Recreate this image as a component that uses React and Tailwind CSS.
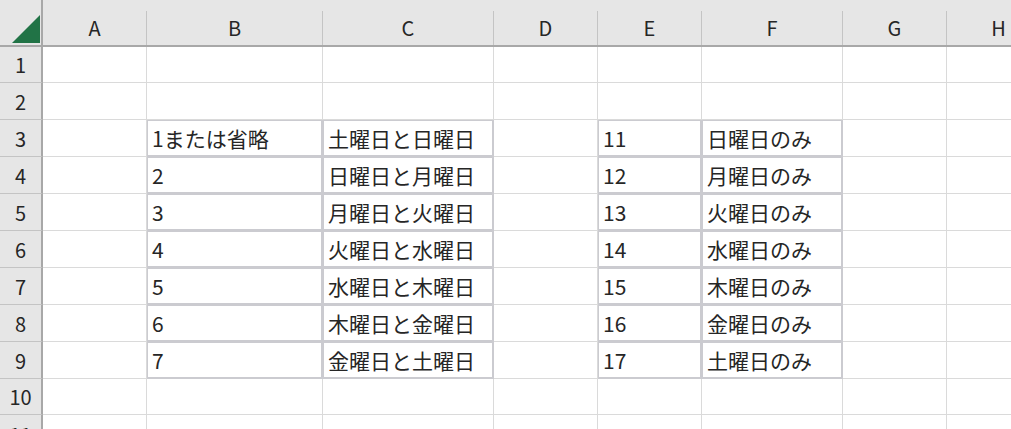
import React from 'react';

const COLS = [
  { key: 'A', w: 'w-[104px]' },
  { key: 'B', w: 'w-[176px]' },
  { key: 'C', w: 'w-[171px]' },
  { key: 'D', w: 'w-[104px]' },
  { key: 'E', w: 'w-[104px]' },
  { key: 'F', w: 'w-[141px]' },
  { key: 'G', w: 'w-[104px]' },
  { key: 'H', w: 'w-[104px]' },
];

const LEFT = ['1または省略', '2', '3', '4', '5', '6', '7'];
const LEFT_DESC = ['土曜日と日曜日', '日曜日と月曜日', '月曜日と火曜日', '火曜日と水曜日', '水曜日と木曜日', '木曜日と金曜日', '金曜日と土曜日'];
const RIGHT = ['11', '12', '13', '14', '15', '16', '17'];
const RIGHT_DESC = ['日曜日のみ', '月曜日のみ', '火曜日のみ', '水曜日のみ', '木曜日のみ', '金曜日のみ', '土曜日のみ'];

const ROW_H = {
  1: 'h-[36px]',
  10: 'h-[36px]',
  11: 'h-[40px]',
};

function cellValue(row, col) {
  if (row < 3 || row > 9) return null;
  const i = row - 3;
  if (col === 'B') return LEFT[i];
  if (col === 'C') return LEFT_DESC[i];
  if (col === 'E') return RIGHT[i];
  if (col === 'F') return RIGHT_DESC[i];
  return null;
}

function isBoxed(row, col) {
  return row >= 3 && row <= 9 && ['B', 'C', 'E', 'F'].includes(col);
}

function Cell({ row, col }) {
  const value = cellValue(row, col.key);
  const boxed = isBoxed(row, col.key);
  return (
    <div
      className={`${col.w} shrink-0 h-full border-r border-b flex items-center pl-[5px] pt-[1px] text-[21px] text-[#262626] whitespace-nowrap overflow-hidden ${
        boxed
          ? 'border-[#cbcbd0] shadow-[inset_1px_1px_0_#cbcbd0,inset_-1px_-1px_0_#cbcbd0]'
          : 'border-[#dadada]'
      }`}
    >
      {value}
    </div>
  );
}

function Row({ row }) {
  const h = ROW_H[row] || 'h-[37px]';
  return (
    <div className={`flex ${h}`}>
      <div className="w-[43px] shrink-0 h-full bg-[#e6e6e6] border-r-2 border-b border-r-[#a8a8a8] border-b-[#c4c4c4] flex items-center justify-center pt-[1px] text-[20px] text-[#262626]">
        {row}
      </div>
      {COLS.map((c) => (
        <Cell key={c.key} row={row} col={c} />
      ))}
    </div>
  );
}

export default function App() {
  const rows = [1, 2, 3, 4, 5, 6, 7, 8, 9, 10, 11];
  return (
    <div
      className="w-[1011px] h-[429px] overflow-hidden bg-white"
      style={{ fontFamily: '"Noto Sans CJK JP", "Noto Sans", sans-serif' }}
    >
      <div className="flex h-[47px] bg-[#e6e6e6] border-b-2 border-[#a8a8a8]">
        <div className="w-[43px] shrink-0 h-full border-r-2 border-[#a8a8a8] relative">
          <svg className="absolute left-[12px] top-[15px]" width="28" height="28" viewBox="0 0 28 28">
            <polygon points="28,0 28,28 0,28" fill="#217346" />
          </svg>
        </div>
        {COLS.map((c) => (
          <div key={c.key} className={`${c.w} shrink-0 h-full flex flex-col`}>
            <div className="h-[11px]" />
            <div className="flex-1 border-r border-[#c4c4c4] flex items-center justify-center text-[20px] text-[#262626]">
              {c.key}
            </div>
          </div>
        ))}
      </div>
      {rows.map((r) => (
        <Row key={r} row={r} />
      ))}
    </div>
  );
}
